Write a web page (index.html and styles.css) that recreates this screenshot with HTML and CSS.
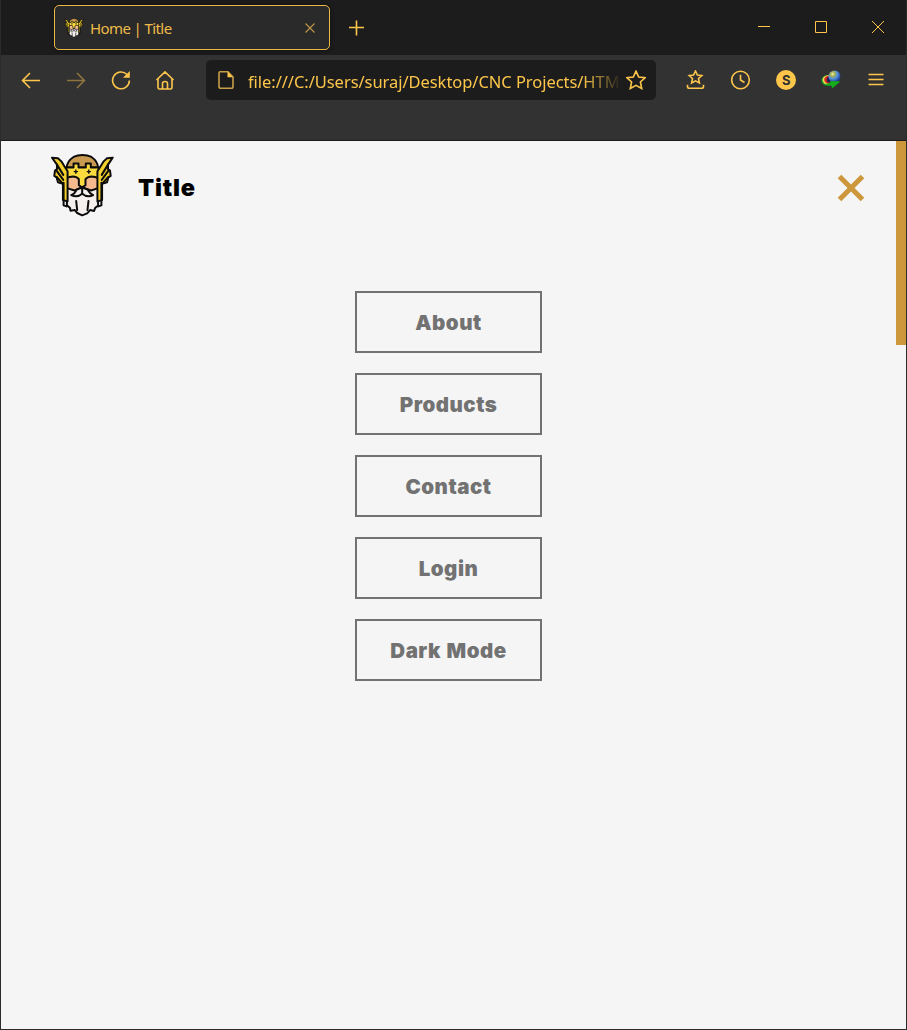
FILE: index.html
```html
<!DOCTYPE html>
<html lang="en">
<head>
<meta charset="utf-8">
<title>Home | Title</title>
<link rel="stylesheet" href="styles.css">
</head>
<body>
<svg class="symbols" aria-hidden="true">
  <symbol id="odin" viewBox="30 22 196 196">
    <g stroke="#0c0c0c" stroke-width="6" stroke-linejoin="round" stroke-linecap="round">
      <path fill="#f5efed" d="M81 125H175V180L166 188L163 197L151 194L142 204L127 210L112 203L105 194L92 196L90 187L81 180Z"/>
      <path fill="#c99b50" d="M80 66Q82 46 101 34Q113 28 128 28Q143 28 155 34Q174 47 175 66Z"/>
      <path fill="#f4b98d" d="M81 92H175V128L154 135L127 126L104 135L81 128Z"/>
      <path fill="#fadb3e" d="M78 66H101V54H116V66H138V54H153V66H177V98Q150 86 137 101V119L127 126L117 119V101Q105 86 78 98Z"/>
      <path fill="#f3cf2d" d="M36 36L54 38Q66 47 71 58L83 77V168L69 164V115L54 110L50 96L43 91L45 75L51 71L51 57Z"/>
      <path fill="#f3cf2d" d="M219 36L202 38Q190 47 185 58L173 77V168L187 164V115L202 110L206 96L213 91L211 75L205 71L205 57Z"/>
      <path fill="none" d="M51 57L70 88M48 73L70 103M50 94L69 115M205 57L186 88M208 73L186 103M206 94L187 115M71 112V180L80 183M185 112V180L176 183"/>
      <path fill="#f5efed" d="M127 126L111 132L103 144L94 149Q112 158 127 145Q143 158 160 149L151 143L143 132Z"/>
      <path fill="none" d="M127 126V145M109 167L112 194M146 167L143 194"/>
      <path fill="none" stroke-width="4" d="M103 78H113M108 73V83M142 78H152M147 73V83"/>
    </g>
  </symbol>
</svg>
<div class="window">
  <div class="titlebar">
    <div class="tab">
      <svg class="favicon"><use href="#odin"/></svg>
      <span class="tab-name">Home | Title</span>
      <svg class="tab-close" viewBox="0 0 10 10"><path d="M.5 .5L9.5 9.5M9.5 .5L.5 9.5"/></svg>
    </div>
    <svg class="new-tab" viewBox="0 0 16 16"><path d="M8.500 .5V15.5M1 7.500H16"/></svg>
    <div class="controls">
      <svg viewBox="0 0 14 14"><path d="M1 6.5H13"/></svg>
      <svg viewBox="0 0 14 14"><path d="M1.5 1.5H12.5V12.5H1.5Z"/></svg>
      <svg viewBox="0 0 14 14"><path d="M1 1L13 13M13 1L1 13"/></svg>
    </div>
  </div>
  <div class="toolbar">
    <div class="nav">
      <svg viewBox="0 0 20 20"><path d="M19 10.5H2M9 3L1.6 10.5L9 18"/></svg>
      <svg class="off" viewBox="0 0 20 20"><path d="M1 10.5H18M11 3L18.4 10.5L11 18"/></svg>
      <svg viewBox="0 0 20 20"><path d="M16 4.5A8.4 8.4 0 1 0 18.4 10.5"/><path class="solid" d="M18.8 1V7.8H12Z"/></svg>
      <svg viewBox="0 0 20 20"><path d="M1.5 10L10 1.8L18.5 10M3 8.7V17.5Q3 19 4.500 19H15.500Q17 19 17 17.500V8.700M7.500 19V13.500Q7.500 11.500 10 11.500T12.500 13.500V19"/></svg>
    </div>
    <div class="address">
      <svg class="page-icon" viewBox="0 0 18 20"><path d="M3 1.8H11L16 7V16.500Q16 18.300 14.300 18.300H3.700Q2 18.300 2 16.500V3Q2 1.800 3 1.800Z"/><path class="solid" d="M10.500 1.500V7.200H16Z"/></svg>
      <span class="url">file:///C:/Users/suraj/Desktop/CNC Projects/HTM</span>
      <svg class="star" viewBox="0 0 20 20"><path d="M10 1.200L12.700 7L19 7.800L14.400 12L15.700 18.500L10 15.300L4.300 18.500L5.600 12L1 7.800L7.300 7Z"/></svg>
    </div>
    <div class="tools">
      <svg viewBox="0 0 20 20"><path d="M9.500 1L11.400 5L15.800 5.500L12.500 8.500L13.400 13L9.500 10.800L5.600 13L6.500 8.500L3.200 5.500L7.600 5ZM1.500 14.800V16.500Q1.500 18.300 3.300 18.300H15.700Q17.500 18.300 17.500 16.500V14.800"/></svg>
      <svg viewBox="0 0 20 20"><circle cx="9.500" cy="10" r="8.800"/><path d="M9.500 4.800V10L13.500 12.500"/></svg>
      <span class="badge">S</span>
      <svg class="globe" viewBox="0 0 20 20">
        <defs><radialGradient id="earth" cx=".35" cy=".3" r=".75"><stop offset="0" stop-color="#f2f3bb"/><stop offset=".25" stop-color="#a3b04a"/><stop offset=".5" stop-color="#5794dc"/><stop offset="1" stop-color="#102f8b"/></radialGradient></defs>
        <ellipse cx="7" cy="10.500" rx="6.800" ry="5.500" fill="#168b29"/>
        <ellipse cx="7.500" cy="10" rx="6" ry="4.800" fill="#f1df52"/>
        <ellipse cx="8.200" cy="9.700" rx="5" ry="4" fill="#d72822"/>
        <ellipse cx="9.500" cy="9.700" rx="3.800" ry="3" fill="#1a2150"/>
        <circle cx="13.500" cy="6.500" r="6" fill="url(#earth)"/>
        <path fill="#15ad19" d="M4 14L9 13L9.500 11L19.500 11.500L11 18.500L10.500 15.500Q7 16 4 14Z"/>
      </svg>
      <svg viewBox="0 0 20 20"><path d="M2.500 4.500H17.500M2.500 9.500H17.500M2.500 14.500H17.500"/></svg>
    </div>
  </div>
  <main class="page">
    <div class="content">
      <header class="site-header">
        <svg class="logo"><use href="#odin"/></svg>
        <span class="site-title">Title</span>
        <svg class="menu-close" viewBox="0 0 28 28"><path d="M2.500 2.500L25.500 25.500M25.500 2.500L2.500 25.500"/></svg>
      </header>
      <nav class="menu">
        <a>About</a>
        <a>Products</a>
        <a>Contact</a>
        <a>Login</a>
        <a>Dark Mode</a>
      </nav>
    </div>
    <div class="scroll-track"><div class="scroll-thumb"></div></div>
  </main>
</div>
</body>
</html>
```
FILE: styles.css
```css
* { box-sizing: border-box; }
body { margin: 0; font-family: "Open Sans", sans-serif; }
svg { display: block; flex: none; }
.symbols { position: absolute; width: 0; height: 0; }
.window {
  width: 907px; height: 1030px; display: flex; flex-direction: column;
  border: solid #2b2b2b; border-width: 0 1px 1px; overflow: hidden;
  background: #323232;
}
.titlebar { height: 55px; flex: none; display: flex; background: #1c1c1c; padding: 5px 0 5px 53px; }
.titlebar svg, .toolbar svg { fill: none; stroke: #fdc64b; stroke-width: 1.6; }
.tab {
  width: 276px; height: 45px; display: flex; align-items: center;
  padding: 0 14px 0 9px; border: 1px solid #ebb845; border-radius: 5px;
  background: #2a2a2a; box-shadow: 0 0 4px #101010;
}
.titlebar .favicon { width: 20px; height: 20px; margin-right: 6px; }
.tab-name { flex: 1; color: #eebb49; font: 15px/20px "Noto Sans", sans-serif; letter-spacing: -.6px; white-space: nowrap; }
.titlebar .tab-close { width: 10px; height: 10px; stroke: #bd9746; stroke-width: 1.1; }
.new-tab { width: 16px; height: 16px; margin: 15px 0 0 18px; }
.controls { display: flex; gap: 43px; margin: 15px 21px 0 auto; }
.controls svg { width: 14px; height: 14px; stroke-width: 1; }
.toolbar { height: 50px; flex: none; display: flex; align-items: center; padding: 0 20px; }
.nav { display: flex; gap: 24.800px; margin-right: 30.600px; }
.nav svg, .tools svg { width: 20px; height: 20px; }
.toolbar .off { opacity: .45; }
.toolbar .solid { fill: #fdc64b; stroke: none; }
.toolbar .globe { stroke: none; }
.address { width: 450px; height: 40px; flex: none; display: flex; align-items: center; background: #1c1c1c; border-radius: 5px; padding: 0 10px 0 11px; }
.address .page-icon { width: 18px; height: 20px; stroke: #c69e48; }
.url {
  width: 371px; margin: 3px 7px 0 13px; white-space: nowrap;
  color: #fdc64b; font: 16.500px/24px "Noto Sans", sans-serif; letter-spacing: -.05px;
  mask-image: linear-gradient(to right, #000 335px, transparent 374px);
}
.star { width: 20px; height: 20px; }
.tools { display: flex; align-items: center; gap: 25.100px; margin-left: 30px; }
.badge { width: 20px; height: 20px; border-radius: 50%; background: #fdc64b; color: #303030; text-align: center; font: bold 13px/20px Inter, sans-serif; }
.page { height: 889px; margin-top: 35px; border-top: 1px solid #1b1b1b; display: flex; flex: none; background: #f5f5f5; }
.content { flex: 1; }
.site-header { height: 94px; display: flex; align-items: center; padding: 0 31px 0 49px; }
.logo { width: 65px; height: 65px; margin-top: -6px; }
.site-title { flex: 1; margin-left: 23px; color: #000; font: 900 23.500px/30px Inter, sans-serif; letter-spacing: .8px; }
.menu-close { width: 28px; height: 28px; fill: none; stroke: #cd973b; stroke-width: 5; }
.menu { display: flex; flex-direction: column; gap: 20px; align-items: center; margin-top: 56px; }
.menu a {
  width: 187px; height: 62px; border: 2px solid #727272; color: #727272; text-align: center;
  font: 900 20.500px/60px Inter, sans-serif; letter-spacing: .5px; word-spacing: 1px;
}
.scroll-track { width: 10px; }
.scroll-thumb { height: 204px; background: #cd973b; }
```
